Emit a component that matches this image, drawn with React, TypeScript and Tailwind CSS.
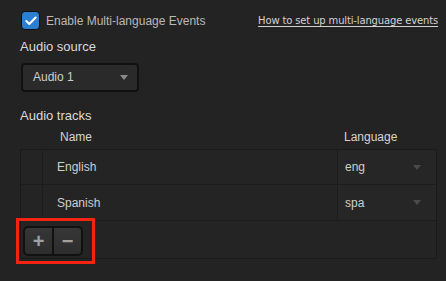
import { Check } from "lucide-react";

const tracks = [
  { name: "English", lang: "eng", h: "h-[35px]" },
  { name: "Spanish", lang: "spa", h: "h-[36px]" },
];

function Caret({ className }: { className: string }) {
  return (
    <svg width="8" height="5" viewBox="0 0 8 5" className={className}>
      <path d="M0 0h8L4 5z" fill="currentColor" />
    </svg>
  );
}

export default function App() {
  return (
    <div className="relative w-[446px] h-[281px] overflow-hidden bg-[#232323] font-['Liberation_Sans',sans-serif]">
      {/* top row */}
      <div className="flex items-center justify-between pl-[21px] pr-[8px] pt-[11px]">
        <label className="flex items-center gap-[6px]">
          <span className="flex h-[19px] w-[19px] items-center justify-center rounded-[4px] border border-[#0d0d0d] bg-[#2b7fd2]">
            <Check className="h-[14px] w-[14px] text-white" strokeWidth={3.5} />
          </span>
          <span className="text-[12px] text-[#b9b9b9]">Enable Multi-language Events</span>
        </label>
        <a className="font-['DejaVu_Sans',sans-serif] text-[10px] tracking-[-0.15px] text-[#d2d2d2] underline underline-offset-2">
          How to set up multi-language events
        </a>
      </div>

      <div className="pl-[20px] pt-[7px] text-[13px] text-[#dadada]">Audio source</div>

      <div className="ml-[21px] mt-[6px] flex h-[29px] w-[118px] items-center justify-between rounded-[4px] border-2 border-[#111] bg-[#2a2a2a] pl-[10px] pr-[9px]">
        <span className="text-[12px] text-[#cfcfcf]">Audio 1</span>
        <Caret className="text-[#8a8a8a]" />
      </div>

      <div className="pl-[20px] pt-[14px] text-[13px] text-[#dadada]">Audio tracks</div>

      <div className="ml-[20px] w-[417px]">
        <div className="grid h-[24px] grid-cols-[23px_294px_100px] items-center text-[12px] text-[#d4d4d4]">
          <span />
          <span className="pl-[17px]">Name</span>
          <span className="pl-[7px]">Language</span>
        </div>
        <div className="border border-[#1a1a1a] bg-[#242424]">
          {tracks.map((t) => (
            <div key={t.lang} className={`grid ${t.h} grid-cols-[22px_294px_99px] border-b border-[#1c1c1c]`}>
              <span className="border-r border-[#1c1c1c]" />
              <span className="flex items-center pl-[14px] text-[12px] text-[#cfcfcf]">{t.name}</span>
              <span className="flex items-center justify-between border-l border-[#1c1c1c] bg-[#262626] pl-[7px] pr-[15px] text-[12px] text-[#cfcfcf]">
                {t.lang}
                <Caret className="text-[#4a4a4a]" />
              </span>
            </div>
          ))}
          <div className="h-[37px] pl-[2px] pt-[5px]">
            <div className="flex h-[30px] w-[60px] rounded-[5px] border-2 border-[#111] bg-gradient-to-b from-[#363636] to-[#2d2d2d]">
              <button className="flex flex-1 items-center justify-center border-r-2 border-[#111] text-[20px] font-bold leading-none text-[#a0a0a0]">+</button>
              <button className="flex flex-1 items-center justify-center text-[20px] font-bold leading-none text-[#a0a0a0]">−</button>
            </div>
          </div>
        </div>
      </div>

      {/* annotation */}
      <div className="absolute left-[16px] top-[218px] h-[46px] w-[79px] border-[3px] border-[#f52312]" />
    </div>
  );
}
